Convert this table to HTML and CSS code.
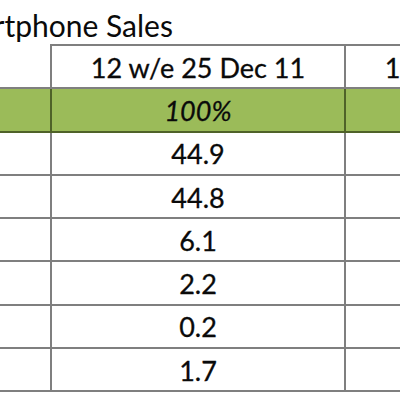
FILE: index.html
```html
<!doctype html>
<html lang="en">
<head>
  <meta charset="utf-8" />
  <title>Smartphone Sales</title>
  <link rel="stylesheet" href="styles.css">
</head>
<body>
  <main class="sheet">
    <h1 class="title">Smartphone Sales</h1>
    <table class="grid">
      <colgroup>
        <col class="c-label" />
        <col class="c-val" />
        <col class="c-val" />
      </colgroup>
      <thead>
        <tr class="head">
          <th class="blank"></th>
          <th>12 w/e 25 Dec 11</th>
          <th>12 w/e 26 Dec 10</th>
        </tr>
      </thead>
      <tbody>
        <tr class="total">
          <td></td><td><em>100%</em></td><td><em>100%</em></td>
        </tr>
        <tr><td></td><td>44.9</td><td></td></tr>
        <tr><td></td><td>44.8</td><td></td></tr>
        <tr><td></td><td>6.1</td><td></td></tr>
        <tr><td></td><td>2.2</td><td></td></tr>
        <tr><td></td><td>0.2</td><td></td></tr>
        <tr><td></td><td>1.7</td><td></td></tr>
      </tbody>
    </table>
  </main>
</body>
</html>
```

FILE: styles.css
```css
:root{
  --line:#7f7f7f;
  --green:#9bbb59;
  --green-line:#4f6228;
  --ink:#0a0a0a;
}

*{box-sizing:border-box}
html,body{margin:0; height:100%; overflow:hidden; background:#fff}
body{font-family: Lato, "Open Sans", sans-serif; color:var(--ink)}

.sheet{width:700px}

.title{
  margin:0 0 0 -62px; height:44px;
  font-size:30px; font-weight:400; line-height:40px;
  padding-top:5px; white-space:nowrap;
}

.grid{border-collapse:collapse; table-layout:fixed; width:640px; font-size:27px}
.c-label{width:51px}
.c-val{width:294px}

.grid th, .grid td{
  height:43.3px; padding:1px 0 0; text-align:center; font-weight:400;
  border:2px solid var(--line); line-height:1;
  -webkit-text-stroke:0.3px var(--ink);
}
.grid tr > :first-child{border-left:0}
.grid .head th.blank{border-top:0}

.grid .total td{background:var(--green); border-color:var(--green-line)}
.grid em{font-style:italic}
```
